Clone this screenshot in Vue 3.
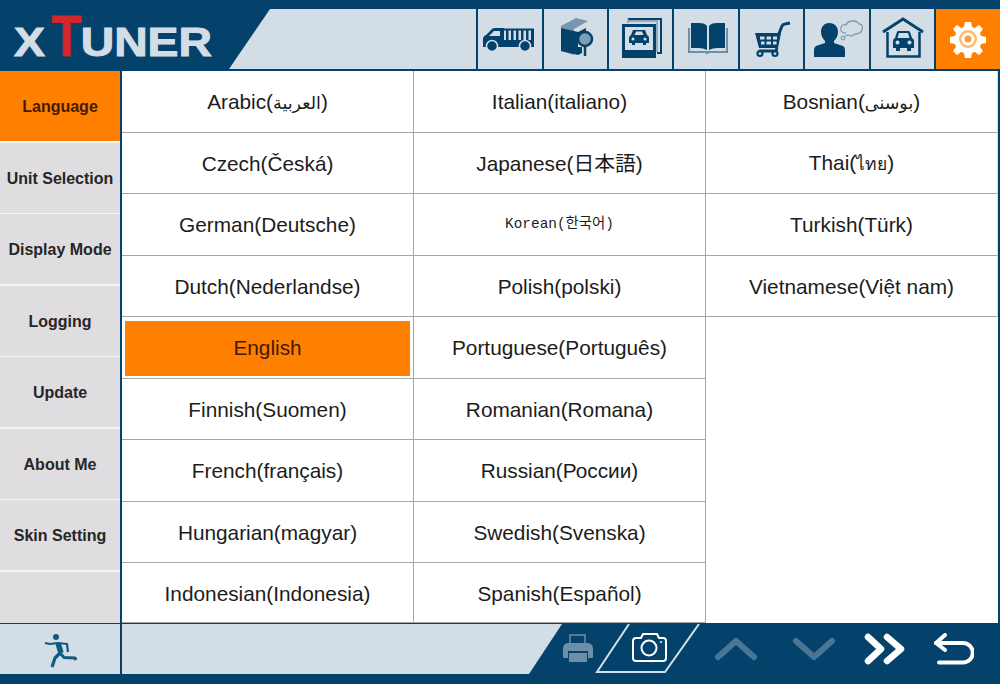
<template>
  <div class="app">
    <header class="top">
      <div class="logo">
        <div class="logo-text"><span>X</span><span class="logo-t">T</span><span>UNER</span></div>
      </div>
      <div class="top-panel"></div>
      <nav class="tools">
        <button class="tool">
          <svg viewBox="0 0 63 60" width="63" height="60">
            <path d="M5 38V30q0-3 3-4l6-6q1-1 3-1h9v19z" fill="#04426c" />
            <path d="M11 27l5-5h6v5z" fill="#d3dde6" />
            <path d="M26 31h30v7H26z" fill="#04426c" />
            <path d="M19 19.500h37v2H19zM28 21h2.500v10H28zM33 21h2.500v10H33zM38 21h2.500v10H38zM43 21h2.500v10H43zM48 21h2.500v10H48zM53 21h3v10h-3z" fill="#04426c" />
            <circle cx="14" cy="37" r="5.500" fill="#04426c" stroke="#d3dde6" stroke-width="1.500" />
            <circle cx="47" cy="37" r="5.500" fill="#04426c" stroke="#d3dde6" stroke-width="1.500" />
          </svg>
        </button>
        <button class="tool">
          <svg viewBox="0 0 63 60" width="63" height="60">
            <path d="M17 17L32 9l12 3-14 8v26l-13-4z" fill="#7897ae" />
            <path d="M17 19l17 4v23l-17-4z" fill="#04426c" />
            <path d="M34 23l8-4v4h-3a9 9 0 0 0-5 11z" fill="#04426c" />
            <path d="M34 38v8l4-2v-6z" fill="#04426c" />
            <circle cx="41" cy="30" r="7" fill="#7f9db3" stroke="#04426c" stroke-width="2.500" />
            <path d="M41 37v10" stroke="#04426c" stroke-width="2.500" />
          </svg>
        </button>
        <button class="tool">
          <svg viewBox="0 0 63 60" width="63" height="60">
            <path d="M19 10h33v34h-4" fill="none" stroke="#04426c" stroke-width="2" />
            <path d="M19 10v4M19 12h29v31" fill="none" stroke="#7f9db3" stroke-width="1.500" />
            <path d="M13 15h34v34H13z" fill="#04426c" />
            <path d="M16 18h28v23H16z" fill="#d3dde6" />
            <path d="M20 34v-5q0-2 2-3l2-5h12l2 5q2 1 2 3v5h-3v2h-3v-2H26v2h-3v-2z" fill="#04426c" />
            <path d="M25.500 26l1.500-3.500h6l1.500 3.500z" fill="#d3dde6" />
            <circle cx="24" cy="30" r="1.500" fill="#d3dde6" />
            <circle cx="36" cy="30" r="1.500" fill="#d3dde6" />
          </svg>
        </button>
        <button class="tool">
          <svg viewBox="0 0 63 60" width="63" height="60">
            <path d="M13 19v25h17l2 1.500 2-1.500h19V19h-2v23H15V19z" fill="#6f8fa8" />
            <path d="M16 14h8q6 0 8 3v24q-4-2-8-2h-8z" fill="#04426c" />
            <path d="M50 14h-8q-6 0-8 3v24q4-2 8-2h8z" fill="#04426c" />
          </svg>
        </button>
        <button class="tool">
          <svg viewBox="0 0 63 60" width="63" height="60">
            <path d="M15 24h26l-3 15H19z" fill="#04426c" />
            <path d="M20 27.500h4.500v3H20zM26.500 27.500H31v3h-4.500zM33 27.500h4v3h-4zM21 32.500h3.500v3H21zM26.500 32.500H31v3h-4.500zM33 32.500h3.500v3H33z" fill="#d3dde6" />
            <path d="M37 39l-1 3H19M38 27l4-10q1-2 3-2l5-1" fill="none" stroke="#04426c" stroke-width="3" />
            <circle cx="20" cy="44.500" r="2.500" fill="none" stroke="#04426c" stroke-width="2.200" />
            <circle cx="35" cy="44.500" r="2.500" fill="none" stroke="#04426c" stroke-width="2.200" />
          </svg>
        </button>
        <button class="tool">
          <svg viewBox="0 0 63 60" width="63" height="60">
            <path d="M24 14c6 0 9 4 9 9 0 4-2 7-4 9v2l9 3q2 1 2 4v7H9v-7q0-3 2-4l9-3v-2c-2-2-4-5-4-9 0-5 3-9 8-9z" fill="#04426c" />
            <path d="M41 24c-4 0-6-2-5-5 0-3 3-4 5-3 1-3 4-4 7-4 3 0 5 1 6 3 3 0 4 3 3 6-1 3-4 4-7 4-2 2-5 2-7 1l-3 1" fill="none" stroke="#7f9db3" stroke-width="1.300" />
            <circle cx="38" cy="29" r="1.800" fill="none" stroke="#7f9db3" stroke-width="1.200" />
          </svg>
        </button>
        <button class="tool">
          <svg viewBox="0 0 63 60" width="63" height="60">
            <path d="M12 23l20-13 20 13" fill="none" stroke="#04426c" stroke-width="3" />
            <path d="M16.500 23v24.500h32V23" fill="none" stroke="#04426c" stroke-width="2.500" />
            <path d="M22 39v-7q0-2 2-3l2-6q0-1 2-1h9q2 0 2 1l2 6q2 1 2 3v7h-3v3h-4v-3H29v3h-4v-3z" fill="#04426c" />
            <path d="M26.500 29l1.500-5h9l1.500 5z" fill="#d3dde6" />
            <circle cx="26.500" cy="33.500" r="2" fill="#d3dde6" />
            <circle cx="38.500" cy="33.500" r="2" fill="#d3dde6" />
          </svg>
        </button>
        <button class="tool tool-on">
          <svg viewBox="0 0 64 60" width="64" height="60">
            <path d="M29 13h6l1 5 3 1 4-3 4 4-3 4 1 3 5 1v6l-5 1-1 3 3 4-4 4-4-3-3 1-1 5h-6l-1-5-3-1-4 3-4-4 3-4-1-3-5-1v-6l5-1 1-3-3-4 4-4 4 3 3-1z" fill="#fff" />
            <circle cx="32" cy="30" r="9" fill="#ff7f00" opacity="0.55" />
            <circle cx="32" cy="30" r="6.500" fill="#fff" />
            <circle cx="32" cy="30" r="3.500" fill="#ff9a3a" />
          </svg>
        </button>
      </nav>
    </header>

    <main class="body">
      <aside class="side">
        <div v-for="(item, i) in menu" :key="item" class="side-item" :class="{ on: i === 0 }">{{ item }}</div>
        <div class="side-item"></div>
      </aside>
      <section class="langs">
        <div
          v-for="lang in languages"
          :key="lang.name"
          class="lang"
          :class="{ on: lang.on, mono: lang.mono }"
        >
          <span v-if="lang.script">{{ lang.name }}(<span class="script">{{ lang.script }}</span>)</span>
          <span v-else>{{ lang.name }}</span>
        </div>
      </section>
    </main>

    <footer class="foot">
      <button class="exit">
        <svg viewBox="0 0 36 38" width="36" height="38">
          <circle cx="14" cy="7" r="3" fill="#115a82" />
          <path d="M3 13l5 1 8-1 9 1 1 8" fill="none" stroke="#115a82" stroke-width="2.200" stroke-linejoin="round" />
          <path d="M16 13l3 10" fill="none" stroke="#115a82" stroke-width="5.500" />
          <path d="M18 23l-5 5-3 9" fill="none" stroke="#115a82" stroke-width="3.200" stroke-linejoin="round" />
          <path d="M18 23l4 4.500 11 0.500 1 2" fill="none" stroke="#115a82" stroke-width="3" stroke-linejoin="round" />
        </svg>
      </button>
      <div class="foot-panel"></div>
      <svg class="shot" viewBox="0 0 140 50" width="140" height="50">
        <path d="M67 0L35 48h68l34-48" fill="none" stroke="#cfe0ee" stroke-width="2" />
        <path d="M8 19v-8h15v8" fill="none" stroke="#6d8ea6" stroke-width="1.500" />
        <path d="M1 25q0-6 5-6h19q6 0 6 6v9h-5v-7H6v7H1z" fill="#6d8ea6" />
        <path d="M7 29h18v9H7z" fill="#6d8ea6" />
        <path d="M71 17q0-3 3-3h5l2-4h14l2 4h4q3 0 3 3v17q0 3-3 3H74q-3 0-3-3z" fill="none" stroke="#fff" stroke-width="2" />
        <circle cx="87" cy="24" r="7.500" fill="none" stroke="#fff" stroke-width="2" />
        <circle cx="99" cy="18" r="1" fill="#fff" />
      </svg>
      <div class="nav">
        <svg class="up" viewBox="0 0 44 26" width="44" height="26">
          <path d="M4 21L22 5l18 16" fill="none" stroke="#4a7594" stroke-width="6" stroke-linecap="round" stroke-linejoin="round" />
        </svg>
        <svg class="down" viewBox="0 0 44 26" width="44" height="26">
          <path d="M4 5l18 16L40 5" fill="none" stroke="#4a7594" stroke-width="6" stroke-linecap="round" stroke-linejoin="round" />
        </svg>
        <svg class="next" viewBox="0 0 42 32" width="42" height="32">
          <path d="M4 4l13 12L4 28M23 4l14 12-14 12" fill="none" stroke="#fff" stroke-width="6.500" stroke-linecap="round" stroke-linejoin="round" />
        </svg>
        <svg class="back" viewBox="0 0 40 32" width="40" height="32">
          <path d="M2 10h27a8.500 8.500 0 0 1 0 19.500H5" fill="none" stroke="#fff" stroke-width="4" stroke-linecap="round" />
          <path d="M11 2l-9 8 9 7" fill="none" stroke="#fff" stroke-width="4" stroke-linecap="round" stroke-linejoin="round" />
        </svg>
      </div>
    </footer>
  </div>
</template>

<script setup>
const menu = ['Language', 'Unit Selection', 'Display Mode', 'Logging', 'Update', 'About Me', 'Skin Setting']

// script: native name in a non-latin script, drawn a bit smaller like the device does
const languages = [
  { name: 'Arabic', script: 'العربية' },
  { name: 'Czech(Česká)' },
  { name: 'German(Deutsche)' },
  { name: 'Dutch(Nederlandse)' },
  { name: 'English', on: true },
  { name: 'Finnish(Suomen)' },
  { name: 'French(français)' },
  { name: 'Hungarian(magyar)' },
  { name: 'Indonesian(Indonesia)' },
  { name: 'Italian(italiano)' },
  { name: 'Japanese(日本語)' },
  { name: 'Korean(한국어)', mono: true },
  { name: 'Polish(polski)' },
  { name: 'Portuguese(Português)' },
  { name: 'Romanian(Romana)' },
  { name: 'Russian(России)' },
  { name: 'Swedish(Svenska)' },
  { name: 'Spanish(Español)' },
  { name: 'Bosnian', script: 'بوسنی' },
  { name: 'Thai', script: 'ไทย' },
  { name: 'Turkish(Türk)' },
  { name: 'Vietnamese(Việt nam)' },
]
</script>

<style>
html,
body {
  margin: 0;
  background: #04426c;
}
</style>

<style scoped>
.app {
  width: 1000px;
  height: 684px;
  display: flex;
  flex-direction: column;
  overflow: hidden;
  background: #04426c;
  font-family: "Liberation Sans", "Noto Sans", sans-serif;
}

button {
  border: 0;
  padding: 0;
  background: none;
  display: flex;
  align-items: center;
  justify-content: center;
}

.top {
  height: 70px;
  flex: none;
  display: flex;
  align-items: flex-start;
  box-sizing: border-box;
  padding-top: 9px;
}

.logo {
  width: 229px;
  flex: none;
  height: 60px;
  box-sizing: border-box;
  padding-left: 14px;
}

.logo-text {
  display: flex;
  align-items: baseline;
  font-weight: 700;
  font-size: 41px;
  line-height: 54px;
  color: #d3dde6;
  white-space: nowrap;
  -webkit-text-stroke: 1px #d3dde6;
  transform: scaleX(1.13);
  transform-origin: left center;
}

.logo-t {
  display: inline-block;
  font-size: 58px;
  color: #d3262e;
  -webkit-text-stroke: 1px #d3262e;
  transform: scaleX(0.75);
  margin: 0 -5.200px 0 1.400px;
}

.top-panel {
  flex: 1;
  height: 60px;
  background: #d3dde6;
  clip-path: polygon(41px 0, 100% 0, 100% 100%, 0 100%);
}

.tools {
  flex: none;
  margin-left: 2px;
  display: flex;
  gap: 2px;
}

.tool {
  width: 63.400px;
  height: 60px;
  background: #d3dde6;
}

.tool-on {
  width: 64px;
  background: #ff7f00;
}

.body {
  flex: 1;
  display: flex;
  min-height: 0;
  padding-top: 1px;
  padding-right: 2px;
}

.side {
  width: 120px;
  flex: none;
  display: flex;
  flex-direction: column;
  gap: 1.500px;
  background: #f4f4f4;
  border-right: 2px solid #04426c;
}

.side-item {
  height: 70px;
  flex: none;
  background: #dfdddf;
  display: flex;
  align-items: center;
  justify-content: center;
  padding-top: 2px;
  box-sizing: border-box;
  font-size: 16px;
  font-weight: 700;
  color: #262626;
  white-space: nowrap;
}

.side-item:last-child {
  flex: 1;
}

.side-item.on {
  background: #ff7f00;
  color: #3f1b00;
}

.langs {
  flex: 1;
  display: grid;
  grid-auto-flow: column;
  grid-template-rows: repeat(8, 61.500px) 1fr;
  grid-template-columns: 292px 292px 292px;
  background: #fff;
}

.lang {
  display: flex;
  align-items: center;
  justify-content: center;
  box-sizing: border-box;
  border-right: 1px solid #a6a6a6;
  border-bottom: 1px solid #a6a6a6;
  padding-top: 2px;
  font-size: 20.800px;
  line-height: 24px;
  color: #1c1c1c;
  font-family: "Liberation Sans", "DejaVu Sans", "Noto Sans CJK JP", sans-serif;
  white-space: nowrap;
}

.lang:nth-child(n + 19) {
  border-right-color: #dcdcdc;
}

.script {
  font-size: 17.500px;
}

.lang.mono {
  padding-top: 0;
  font-size: 14.400px;
  font-family: "Liberation Mono", "Noto Sans CJK KR", monospace;
}

.lang.on {
  position: relative;
  color: #3f1b00;
}

.lang.on span {
  position: relative;
}

.lang.on::before {
  content: "";
  position: absolute;
  inset: 4px 3px 2px 3px;
  background: #ff7f00;
}

.foot {
  height: 61px;
  flex: none;
  box-sizing: border-box;
  padding: 1px 0 10px;
  display: flex;
  background: #04426c;
}

.exit {
  width: 120px;
  flex: none;
  background: #d3dde6;
  margin-right: 2px;
}

.foot-panel {
  width: 440px;
  flex: none;
  background: #d3dde6;
  clip-path: polygon(0 0, 100% 0, 407px 100%, 0 100%);
}

.shot {
  flex: none;
}

.nav {
  display: flex;
  align-items: center;
}

.up {
  margin-left: 12px;
}

.down {
  margin-left: 34px;
}

.next {
  margin-left: 28px;
}

.back {
  margin-left: 28px;
}
</style>
